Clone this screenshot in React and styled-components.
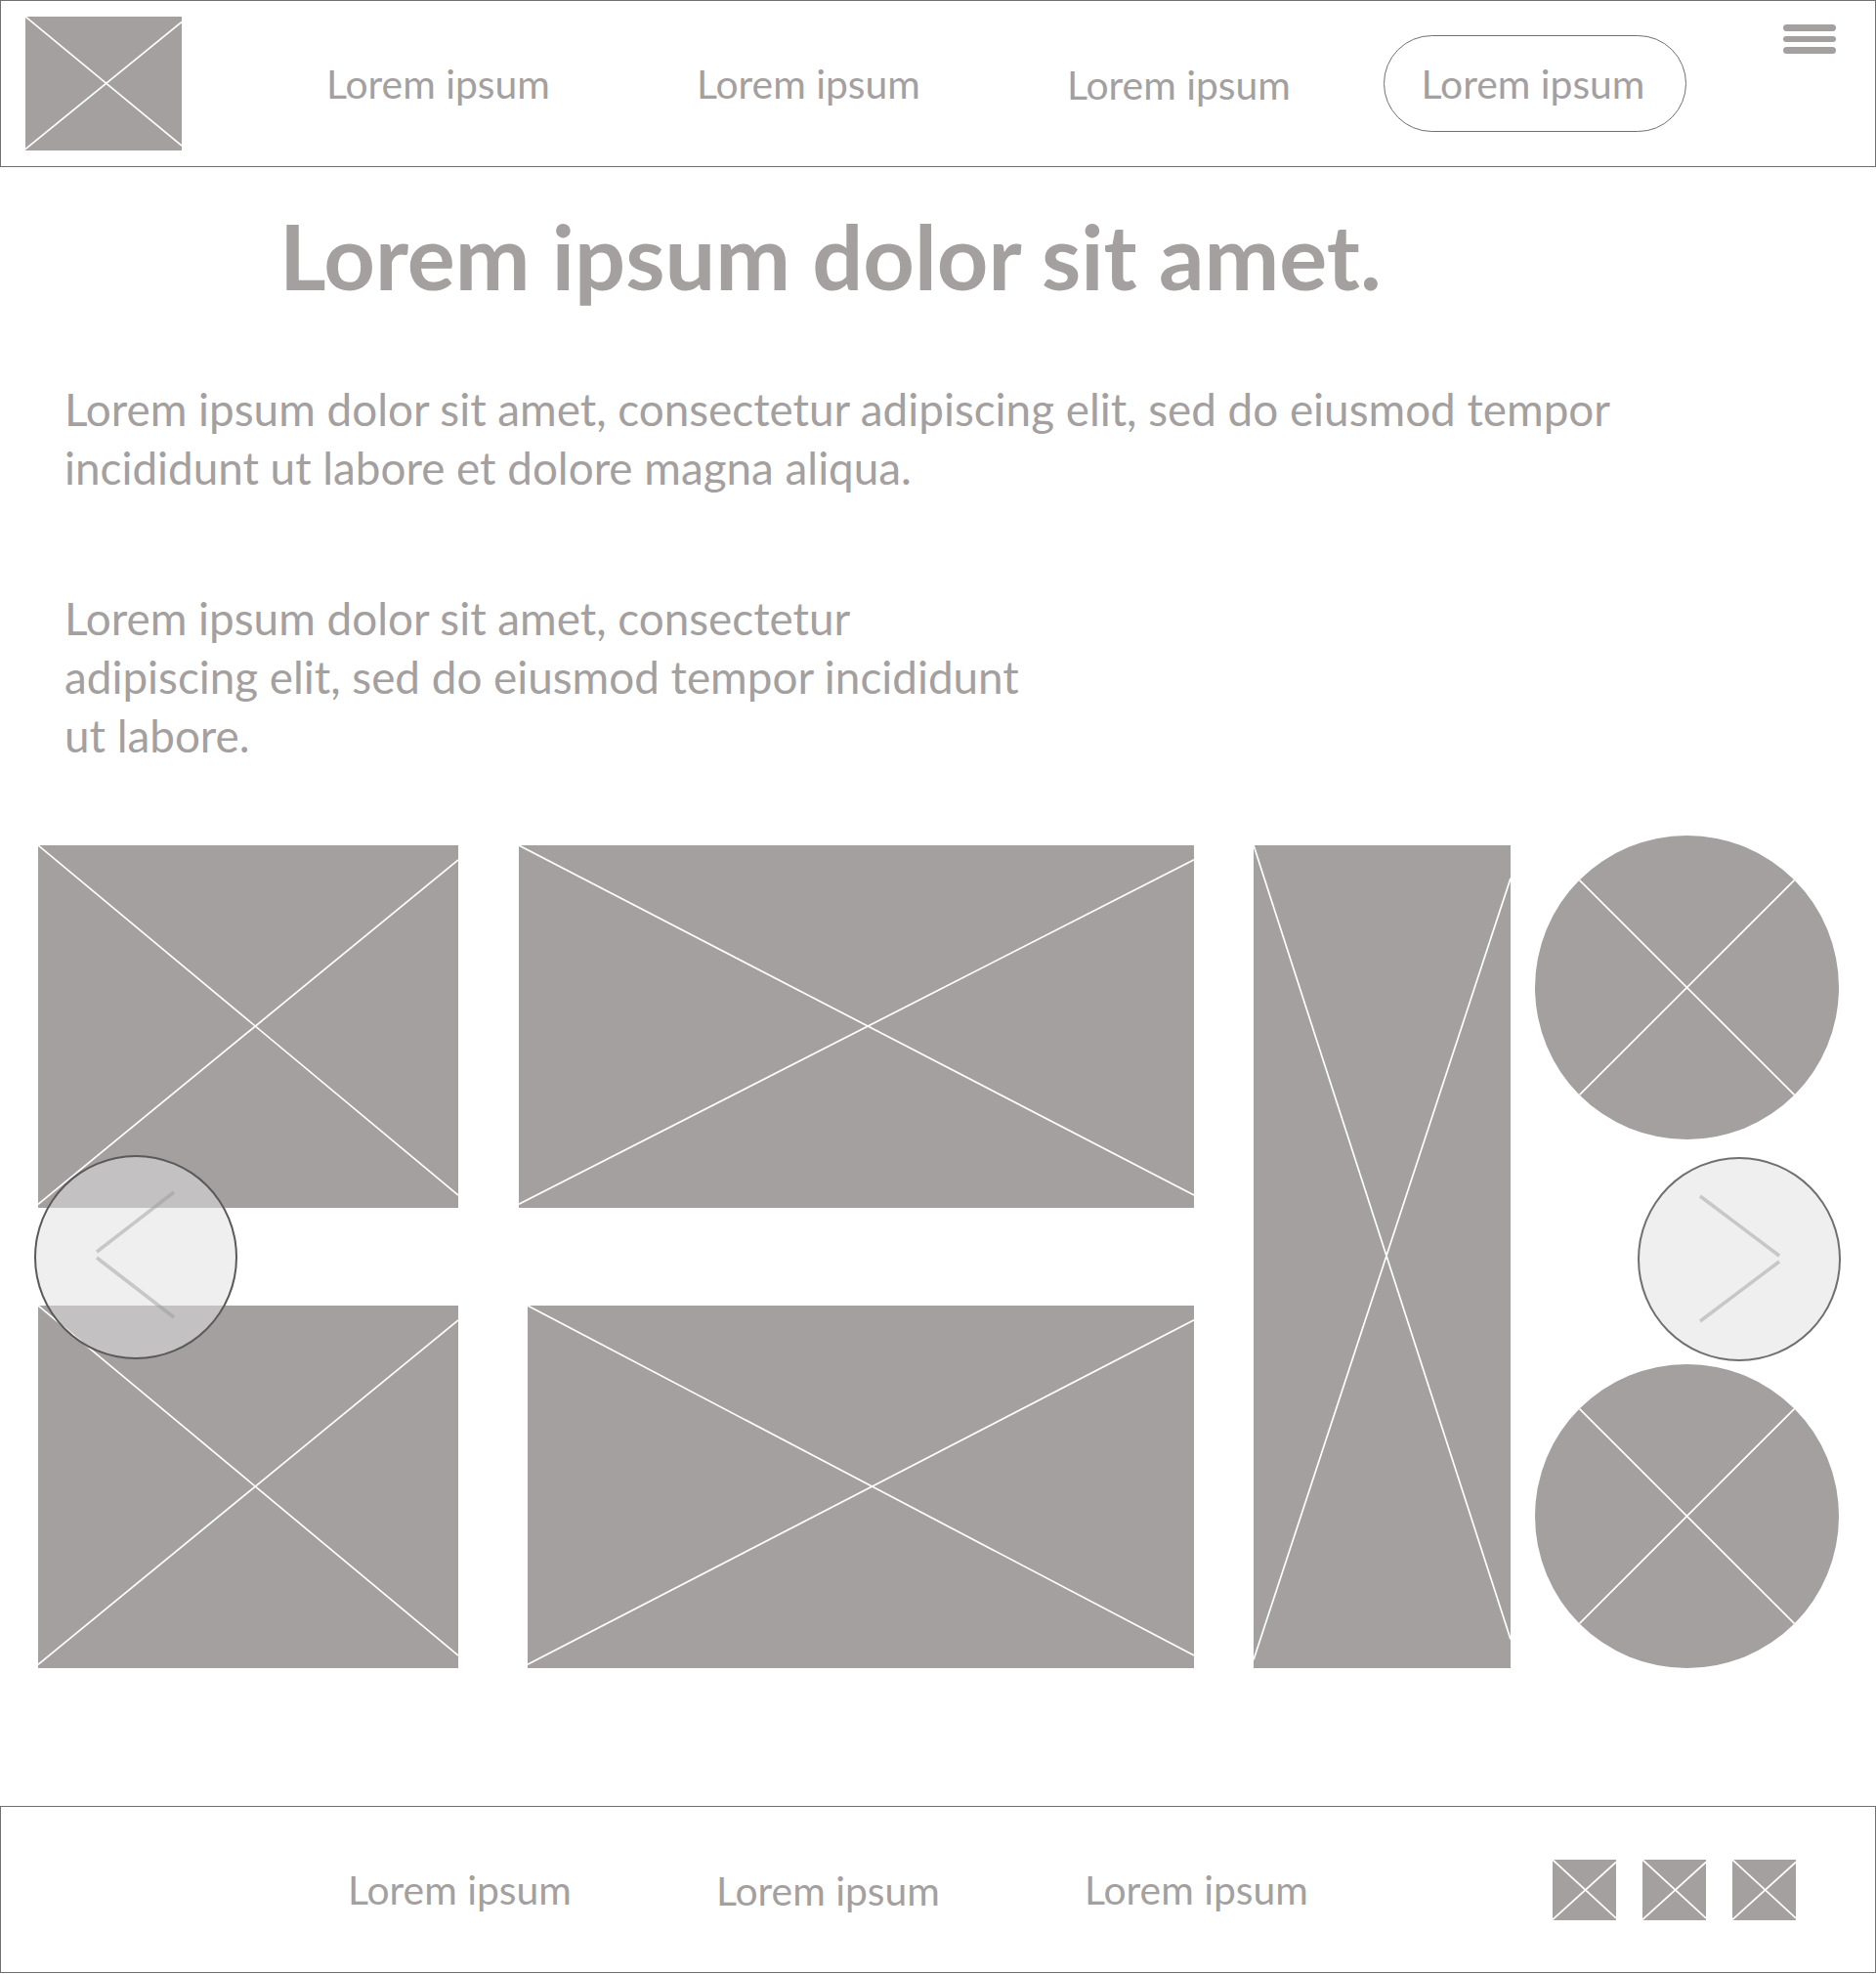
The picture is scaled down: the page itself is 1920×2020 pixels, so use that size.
import React from "react";
import styled, { createGlobalStyle } from "styled-components";

const GRAY = "#a3a09f";
const LINE = "#707070";

const Global = createGlobalStyle`
  html, body { margin: 0; padding: 0; background: #fff; }
  body { font-family: Lato, "Noto Sans", sans-serif; color: ${GRAY}; width: 1920px; }
  * { box-sizing: border-box; }
`;

const Page = styled.div`
  width: 1920px;
  display: flex;
  flex-direction: column;
`;

/* ---------- header ---------- */
const Header = styled.header`
  height: 171px;
  border: 1px solid ${LINE};
  display: flex;
  align-items: center;
  padding-left: 25px;
`;

const LogoBox = styled.div`
  width: 160px;
  height: 137px;
  align-self: flex-start;
  margin-top: 16px;
  flex: none;
`;

const NavList = styled.nav`
  display: flex;
  align-items: center;
  gap: 149px;
  margin-left: 148px;
`;

const NavLink = styled.a`
  display: block;
  width: 230px;
  font-size: 40.8px;
  line-height: 50px;
  color: ${GRAY};
  text-decoration: none;
  white-space: nowrap;
  margin-top: ${(p) => p.$shift || 0}px;
`;

const PillButton = styled.button`
  width: 310px;
  height: 99px;
  margin-left: 94px;
  border: 1px solid ${LINE};
  border-radius: 50px;
  background: #fff;
  font-family: Lato, "Noto Sans", sans-serif;
  font-size: 40.8px;
  line-height: 50px;
  color: ${GRAY};
  padding: 0 4px 0 0;
  flex: none;
`;

const Burger = styled.div`
  align-self: flex-start;
  margin-top: 24px;
  margin-left: 99px;
  width: 54px;
  display: flex;
  flex-direction: column;
  gap: 5px;
`;

const BurgerBar = styled.span`
  display: block;
  height: 6.5px;
  border-radius: 4px;
  background: ${GRAY};
`;

/* ---------- intro text ---------- */
const Title = styled.h1`
  margin: 37px 0 0 286px;
  font-size: 91.7px;
  font-weight: 700;
  line-height: 108px;
  color: ${GRAY};
  white-space: nowrap;
`;

const Paragraph = styled.p`
  margin: ${(p) => p.$top}px 0 0 66px;
  font-size: 45.8px;
  line-height: 60px;
  color: ${GRAY};
  white-space: nowrap;
`;

/* ---------- gallery ---------- */
const Gallery = styled.section`
  position: relative;
  margin-top: 72px;
  padding-left: 39px;
  display: flex;
  align-items: flex-end;
`;

const Column = styled.div`
  display: flex;
  flex-direction: column;
  align-items: flex-end;
  justify-content: space-between;
  width: ${(p) => p.$w}px;
  height: ${(p) => p.$h}px;
  margin-left: ${(p) => p.$gap || 0}px;
  flex: none;
`;

const Frame = styled.div`
  width: ${(p) => p.$w}px;
  height: ${(p) => p.$h}px;
  flex: none;
  display: block;
  svg { display: block; }
`;

const ArrowButton = styled.button`
  position: absolute;
  top: ${(p) => p.$top}px;
  left: ${(p) => p.$left}px;
  width: 208px;
  height: 209px;
  border-radius: 50%;
  border: 2px solid ${(p) => p.$border};
  background: rgba(224, 224, 224, 0.52);
  padding: 0;
  svg { display: block; }
`;

/* ---------- footer ---------- */
const Footer = styled.footer`
  margin-top: 141px;
  height: 171px;
  border: 1px solid ${LINE};
  display: flex;
  align-items: center;
  padding-left: 355px;
`;

const FooterLinks = styled.div`
  display: flex;
  align-items: center;
  gap: 147px;
`;

const Socials = styled.div`
  display: flex;
  gap: 27px;
  margin-left: 249px;
`;

/* ---------- drawings ---------- */
function Placeholder({ w, h }) {
  return (
    <Frame $w={w} $h={h}>
      <svg width={w} height={h} viewBox={`0 0 ${w} ${h}`}>
        <rect width={w} height={h} fill={GRAY} />
        <line x1="0" y1="0" x2={w} y2={h * 0.965} stroke="#fff" strokeWidth="1.7" />
        <line x1={w} y1={h * 0.04} x2="0" y2={h * 0.99} stroke="#fff" strokeWidth="1.7" />
      </svg>
    </Frame>
  );
}

function CirclePlaceholder({ d }) {
  const r = d / 2;
  const o = r * 0.7071;
  return (
    <Frame $w={d} $h={d}>
      <svg width={d} height={d} viewBox={`0 0 ${d} ${d}`}>
        <circle cx={r} cy={r} r={r} fill={GRAY} />
        <line x1={r - o} y1={r - o} x2={r + o} y2={r + o} stroke="#fff" strokeWidth="1.7" />
        <line x1={r + o} y1={r - o} x2={r - o} y2={r + o} stroke="#fff" strokeWidth="1.7" />
      </svg>
    </Frame>
  );
}

function Chevron({ dir }) {
  const pts =
    dir === "left"
      ? [[141, 36, 62, 97], [62, 103, 141, 164]]
      : [[62, 38, 143, 99], [143, 105, 62, 166]];
  return (
    <svg width="204" height="205" viewBox="0 0 204 205">
      {pts.map(([a, b, c, d], i) => (
        <line key={i} x1={a} y1={b} x2={c} y2={d} stroke="rgba(150,150,150,0.45)" strokeWidth="3.5" />
      ))}
    </svg>
  );
}

const navItems = [
  { label: "Lorem ipsum", shift: 0 },
  { label: "Lorem ipsum", shift: 0 },
  { label: "Lorem ipsum", shift: 3 },
];

const footerItems = [
  { label: "Lorem ipsum", shift: 0 },
  { label: "Lorem ipsum", shift: 3 },
  { label: "Lorem ipsum", shift: 0 },
];

export default function App() {
  return (
    <Page>
      <Global />
      <Header>
        <LogoBox>
          <Placeholder w={160} h={137} />
        </LogoBox>
        <NavList>
          {navItems.map((n, i) => (
            <NavLink key={i} href="#" $shift={n.shift}>
              {n.label}
            </NavLink>
          ))}
        </NavList>
        <PillButton>Lorem ipsum</PillButton>
        <Burger>
          <BurgerBar />
          <BurgerBar />
          <BurgerBar />
        </Burger>
      </Header>

      <Title>Lorem ipsum dolor sit amet.</Title>
      <Paragraph $top={73}>
        Lorem ipsum dolor sit amet, consectetur adipiscing elit, sed do eiusmod tempor
        <br />
        incididunt ut labore et dolore magna aliqua.
      </Paragraph>
      <Paragraph $top={94}>
        Lorem ipsum dolor sit amet, consectetur
        <br />
        adipiscing elit, sed do eiusmod tempor incididunt
        <br />
        ut labore.
      </Paragraph>

      <Gallery>
        <Column $w={430} $h={842}>
          <Placeholder w={430} h={371} />
          <Placeholder w={430} h={371} />
        </Column>
        <Column $w={691} $h={842} $gap={62}>
          <Placeholder w={691} h={371} />
          <Placeholder w={682} h={371} />
        </Column>
        <Column $w={263} $h={842} $gap={61}>
          <Placeholder w={263} h={842} />
        </Column>
        <Column $w={311} $h={852} $gap={25}>
          <CirclePlaceholder d={311} />
          <CirclePlaceholder d={311} />
        </Column>
        <ArrowButton $left={35} $top={327} $border="#5a5a5a" aria-label="previous">
          <Chevron dir="left" />
        </ArrowButton>
        <ArrowButton $left={1676} $top={329} $border={LINE} aria-label="next">
          <Chevron dir="right" />
        </ArrowButton>
      </Gallery>

      <Footer>
        <FooterLinks>
          {footerItems.map((n, i) => (
            <NavLink key={i} href="#" $shift={n.shift}>
              {n.label}
            </NavLink>
          ))}
        </FooterLinks>
        <Socials>
          <Placeholder w={65} h={62} />
          <Placeholder w={65} h={62} />
          <Placeholder w={65} h={62} />
        </Socials>
      </Footer>
    </Page>
  );
}
